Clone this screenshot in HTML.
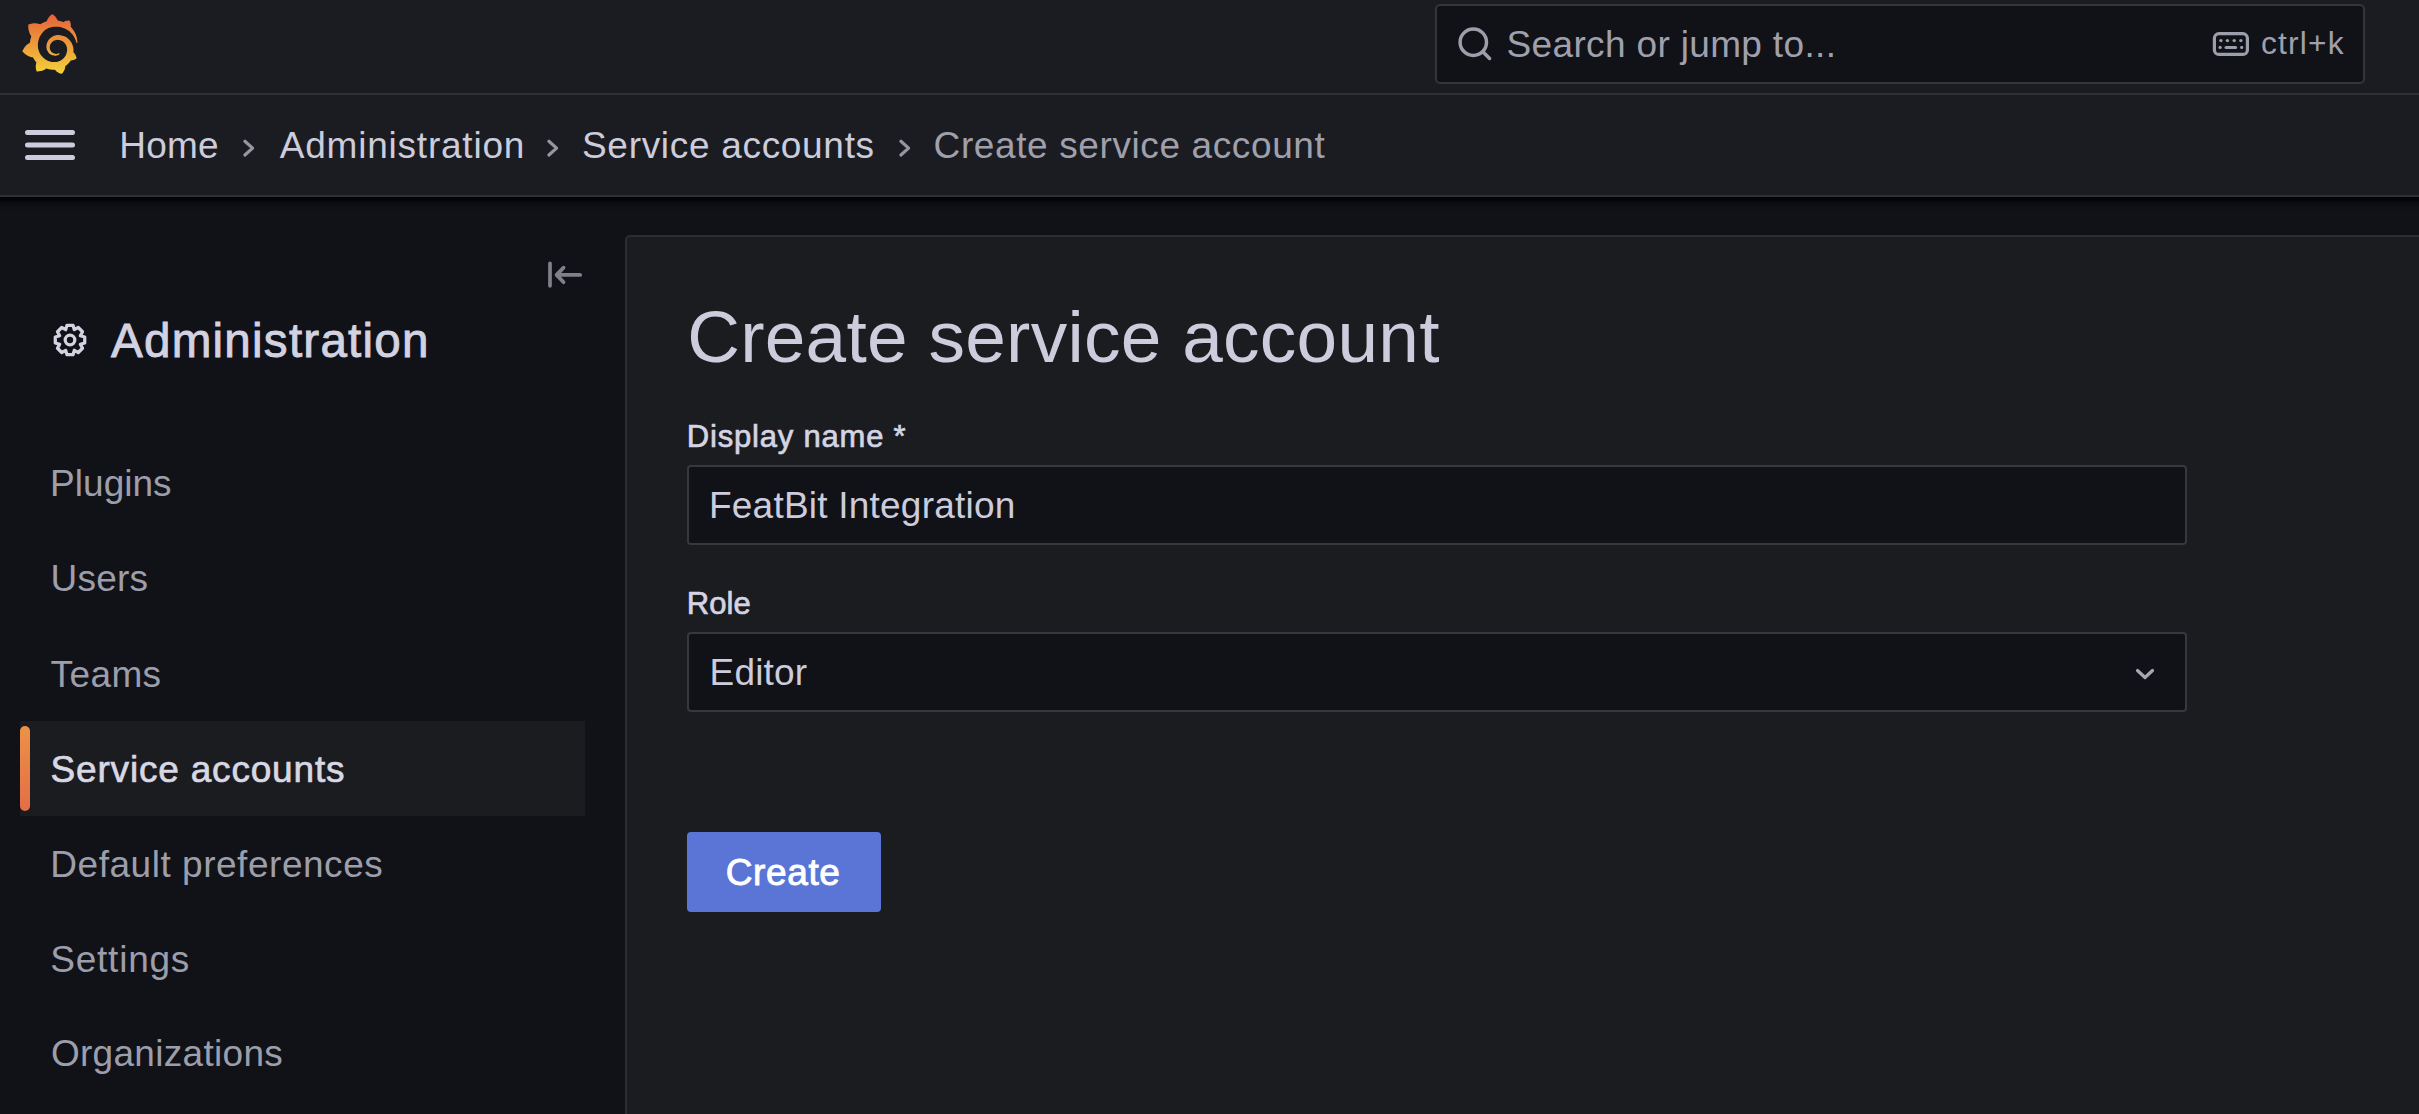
<!DOCTYPE html>
<html><head><meta charset="utf-8">
<style>
html,body{margin:0;padding:0;}
body{width:2419px;height:1114px;overflow:hidden;background:#111217;position:relative;font-family:"Liberation Sans",sans-serif;color:#ccccdc;}
.a{position:absolute;white-space:nowrap;line-height:1;}
#top{position:absolute;left:0;top:0;width:2419px;height:93px;background:#1b1c21;border-bottom:2px solid #2f3035;}
#bc{position:absolute;left:0;top:95px;width:2419px;height:100px;background:#1b1c21;border-bottom:2px solid #303136;}
#shadow{position:absolute;left:0;top:197px;width:2419px;height:14px;background:linear-gradient(#020308 0px,#04050a 3px,#0a0b0f 5px,#0e0f14 9px,#111217 14px);}
#search{position:absolute;left:1435px;top:4px;width:926px;height:76px;background:#111217;border:2px solid #34353b;border-radius:5px;}
#panel{position:absolute;left:625px;top:235px;width:1900px;height:1000px;background:#1b1c20;border:2px solid #2c2d33;border-radius:5px;}
.t37{font-size:37px;}
.sec{color:#a0a0ad;}
.inp{position:absolute;background:#111217;border:2px solid #37383e;border-radius:4px;}
.side{font-size:37px;color:#9d9eab;letter-spacing:0.7px;}
</style></head><body>
<div id="top"></div>
<div id="bc"></div>
<div id="shadow"></div>

<!-- logo -->
<svg class="a" style="left:21.1px;top:14.1px" width="57.7" height="60" viewBox="0 0 351 365">
<defs><linearGradient id="lg" x1="50%" x2="50%" y1="100%" y2="0%"><stop offset="0%" stop-color="#f3d23a"/><stop offset="100%" stop-color="#e6623a"/></linearGradient></defs>
<path fill="url(#lg)" d="M342,161.2c-0.6-6.1-1.6-13.1-3.6-20.9c-1.9-7.7-4.9-16.2-9.3-25c-4.4-8.8-10.1-17.9-17.5-26.8c-2.9-3.5-6.1-6.9-9.5-10.2c5.1-20.3-6.2-37.9-6.2-37.9c-19.5-1.2-31.9,6.1-36.5,9.4c-0.8-0.3-1.5-0.7-2.3-1c-3.3-1.3-6.7-2.6-10.3-3.7c-3.5-1.1-7.1-2.1-10.8-3c-3.7-0.9-7.4-1.6-11.2-2.2c-0.7-0.1-1.3-0.2-2-0.3c-8.5-27.2-32.9-38.6-32.9-38.6c-27.3,17.3-32.4,41.5-32.4,41.5s-0.1,0.5-0.3,1.4c-1.5,0.4-3,0.9-4.5,1.3c-2.1,0.6-4.2,1.4-6.2,2.2c-2.1,0.8-4.1,1.6-6.2,2.5c-4.1,1.8-8.2,3.8-12.2,6c-3.9,2.2-7.7,4.6-11.4,7.1c-0.5-0.2-1-0.4-1-0.4c-37.8-14.4-71.3,2.9-71.3,2.9c-3.1,40.2,15.1,65.5,18.7,70.1c-0.9,2.5-1.7,5-2.5,7.5c-2.8,9.1-4.9,18.4-6.2,28.1c-0.2,1.4-0.4,2.8-0.5,4.2C18.8,192.7,8.5,228,8.5,228c29.1,33.5,63.1,35.6,63.1,35.6c0,0,0.1-0.1,0.1-0.1c4.3,7.7,9.3,15,15,21.9c2.4,2.9,4.9,5.7,7.5,8.3c-10.6,30.4,1.5,55.6,1.5,55.6c32.4,1.2,53.7-14.2,58.2-17.7c3.2,1.1,6.5,2.1,9.8,2.9c10,2.6,20.2,4.1,30.4,4.5c2.5,0.1,5.1,0.2,7.6,0.1l1.2,0l0.8,0l1.6,0l1.6-0.1l0,0.1c15.3,21.8,42.1,24.9,42.1,24.9c19.1-20.1,20.2-40.1,20.2-44.4l0,0c0,0,0-0.1,0-0.3c0-0.4,0-0.6,0-0.6l0,0c0-0.3,0-0.6,0-0.9c4-2.8,7.8-5.8,11.4-9.1c7.6-6.9,14.3-14.8,19.9-23.3c0.5-0.8,1-1.6,1.5-2.4c21.6,1.2,36.9-13.4,36.9-13.4c-3.6-22.5-16.4-33.5-19.1-35.6l0,0c0,0-0.1-0.1-0.3-0.2c-0.2-0.1-0.2-0.2-0.2-0.2c0,0,0,0,0,0c-0.1-0.1-0.2-0.1-0.4-0.2c0.1-1.4,0.2-2.7,0.3-4.1c0.2-2.4,0.2-4.9,0.2-7.3l0-1.8l0-0.9l0-0.5c0-0.6,0-0.4,0-0.6l-0.1-1.5l-0.1-2c0-0.7-0.1-1.3-0.2-1.9c-0.1-0.6-0.1-1.3-0.2-1.9l-0.2-1.9l-0.3-1.9c-0.4-2.5-0.8-4.9-1.4-7.4c-2.3-9.7-6.1-18.9-11-27.2c-5-8.3-11.2-15.6-18.3-21.8c-7-6.2-14.9-11.2-23.1-14.9c-8.3-3.7-16.9-6.1-25.5-7.2c-4.3-0.6-8.6-0.8-12.9-0.7l-1.6,0l-0.4,0c-0.1,0-0.6,0-0.5,0l-0.7,0l-1.6,0.1c-0.6,0-1.2,0.1-1.7,0.1c-2.2,0.2-4.4,0.5-6.5,0.9c-8.6,1.6-16.7,4.7-23.8,9c-7.1,4.3-13.3,9.6-18.3,15.6c-5,6-8.9,12.7-11.6,19.6c-2.7,6.9-4.2,14.1-4.6,21c-0.1,1.7-0.1,3.5-0.1,5.2c0,0.4,0,0.9,0,1.3l0.1,1.4c0.1,0.8,0.1,1.7,0.2,2.5c0.3,3.5,1,6.9,1.9,10.1c1.9,6.5,4.9,12.4,8.6,17.4c3.7,5,8.2,9.1,12.9,12.4c4.7,3.2,9.8,5.5,14.8,7c5,1.5,10,2.1,14.7,2.1c0.6,0,1.2,0,1.7,0c0.3,0,0.6,0,0.9,0c0.3,0,0.6,0,0.9-0.1c0.5,0,1-0.1,1.5-0.1c0.1,0,0.3,0,0.4-0.1l0.5-0.1c0.3,0,0.6-0.1,0.9-0.1c0.6-0.1,1.1-0.2,1.7-0.3c0.6-0.1,1.1-0.2,1.6-0.4c1.1-0.2,2.1-0.6,3.1-0.9c2-0.7,4-1.5,5.7-2.4c1.8-0.9,3.4-2,5-3c0.4-0.3,0.9-0.6,1.3-1c1.6-1.3,1.9-3.7,0.6-5.3c-1.1-1.4-3.1-1.8-4.7-0.9c-0.4,0.2-0.8,0.4-1.2,0.6c-1.4,0.7-2.8,1.3-4.3,1.8c-1.5,0.5-3.1,0.9-4.7,1.2c-0.8,0.1-1.6,0.2-2.5,0.3c-0.4,0-0.8,0.1-1.300,0.1c-0.4,0-0.9,0-1.2,0c-0.4,0-0.8,0-1.2,0c-0.5,0-1,0-1.5-0.1c0,0-0.3,0-0.1,0l-0.2,0l-0.3,0c-0.2,0-0.5,0-0.7-0.1c-0.5-0.1-0.9-0.1-1.4-0.2c-3.7-0.5-7.4-1.6-10.9-3.2c-3.6-1.6-7-3.8-10.1-6.6c-3.1-2.8-5.8-6.1-7.9-9.9c-2.1-3.8-3.6-8-4.3-12.4c-0.3-2.2-0.5-4.5-0.4-6.700c0-0.6,0.1-1.2,0.1-1.8c0,0.2,0-0.1,0-0.1l0-0.2l0-0.5c0-0.3,0.1-0.6,0.1-0.9c0.1-1.2,0.3-2.4,0.5-3.6c1.7-9.6,6.5-19,13.9-26.1c1.9-1.8,3.9-3.4,6-4.9c2.1-1.5,4.4-2.8,6.8-3.9c2.4-1.1,4.8-2,7.4-2.7c2.5-0.7,5.1-1.1,7.8-1.4c1.3-0.1,2.6-0.2,4-0.2c0.4,0,0.6,0,0.9,0l1.1,0l0.7,0c0.3,0,0,0,0.1,0l0.3,0l1.1,0.1c2.9,0.2,5.7,0.6,8.5,1.3c5.6,1.2,11.1,3.3,16.2,6.1c10.2,5.7,18.9,14.5,24.2,25.1c2.7,5.3,4.6,11,5.5,16.9c0.2,1.5,0.4,3,0.5,4.5l0.1,1.1l0.1,1.1c0,0.4,0,0.8,0,1.1c0,0.4,0,0.8,0,1.1l0,1l0,1.1c0,0.7-0.1,1.9-0.1,2.6c-0.1,1.6-0.3,3.3-0.5,4.9c-0.2,1.6-0.5,3.2-0.8,4.8c-0.3,1.6-0.7,3.2-1.1,4.7c-0.8,3.1-1.8,6.2-3,9.3c-2.4,6-5.6,11.8-9.4,17.1c-7.7,10.6-18.2,19.2-30.2,24.7c-6,2.7-12.3,4.7-18.8,5.7c-3.2,0.6-6.5,0.9-9.8,1l-0.6,0l-0.5,0l-1.1,0l-1.6,0l-0.8,0c0.4,0-0.1,0-0.1,0l-0.3,0c-1.8,0-3.5-0.1-5.3-0.3c-7-0.5-13.9-1.8-20.6-3.7c-6.7-1.9-13.2-4.6-19.4-7.8c-12.3-6.6-23.4-15.6-32-26.5c-4.3-5.4-8.1-11.3-11.2-17.4c-3.1-6.1-5.6-12.6-7.4-19.1c-1.8-6.6-2.9-13.3-3.4-20.1l-0.1-1.3l0-0.3l0-0.3l0-0.6l0-1.1l0-0.3l0-0.4l0-0.8l0-1.6l0-0.3c0,0,0,0.1,0-0.1l0-0.6c0-0.8,0-1.7,0-2.5c0.1-3.3,0.4-6.8,0.8-10.2c0.4-3.4,1-6.9,1.7-10.3c0.7-3.4,1.5-6.8,2.5-10.2c1.9-6.7,4.3-13.2,7.1-19.3c5.7-12.2,13.1-23.1,22-31.8c2.2-2.2,4.5-4.2,6.9-6.2c2.4-1.9,4.9-3.7,7.5-5.4c2.5-1.7,5.2-3.2,7.9-4.6c1.3-0.7,2.7-1.4,4.1-2c0.7-0.3,1.4-0.6,2.1-0.9c0.7-0.3,1.4-0.6,2.1-0.9c2.8-1.2,5.7-2.2,8.7-3.1c0.7-0.2,1.5-0.4,2.2-0.7c0.7-0.2,1.5-0.4,2.2-0.6c1.5-0.4,3-0.8,4.5-1.1c0.7-0.2,1.5-0.3,2.3-0.5c0.8-0.2,1.5-0.3,2.3-0.5c0.8-0.1,1.5-0.3,2.3-0.4l1.1-0.2l1.2-0.2c0.8-0.1,1.5-0.2,2.3-0.3c0.9-0.1,1.7-0.2,2.6-0.3c0.7-0.1,1.9-0.2,2.6-0.3c0.5-0.1,1.1-0.1,1.6-0.2l1.1-0.1l0.5,0l0.6,0c0.9-0.1,1.7-0.1,2.6-0.2l1.3-0.1c0,0,0.5,0,0.1,0l0.3,0l0.6,0c0.7,0,1.5-0.1,2.2-0.1c2.9-0.1,5.9-0.1,8.8,0c5.8,0.2,11.5,0.9,17,1.9c11.1,2.1,21.5,5.6,31,10.3c9.5,4.6,17.9,10.3,25.3,16.5c0.5,0.4,0.9,0.8,1.4,1.2c0.4,0.4,0.9,0.8,1.3,1.2c0.9,0.8,1.7,1.6,2.6,2.4c0.9,0.8,1.7,1.6,2.5,2.4c0.8,0.8,1.6,1.6,2.4,2.5c3.1,3.3,6,6.6,8.6,10c5.2,6.7,9.4,13.5,12.7,19.9c0.2,0.4,0.4,0.8,0.6,1.2c0.2,0.4,0.4,0.8,0.6,1.2c0.4,0.8,0.8,1.6,1.1,2.4c0.4,0.8,0.7,1.5,1.1,2.3c0.3,0.8,0.7,1.5,1,2.3c1.2,3,2.4,5.9,3.3,8.6c1.5,4.4,2.6,8.3,3.5,11.7c0.3,1.4,1.6,2.3,3,2.1c1.5-0.1,2.6-1.3,2.6-2.8C342.6,170.4,342.5,166.1,342,161.2z"/>
</svg>

<!-- search -->
<div id="search"></div>
<svg class="a" style="left:1456px;top:26px" width="38" height="38" viewBox="0 0 38 38"><circle cx="17.3" cy="16.2" r="13.2" fill="none" stroke="#9d9eab" stroke-width="3.5"/><path d="M26.9 25.8 L33.6 32.5" stroke="#9d9eab" stroke-width="3.5" stroke-linecap="round"/></svg>
<div class="a t37 sec" style="left:1506.6px;top:25.7px;letter-spacing:0.34px;">Search or jump to...</div>
<svg class="a" style="left:2211px;top:31px" width="40" height="27" viewBox="0 0 40 27"><rect x="3.4" y="2.7" width="33" height="20.7" rx="4.5" fill="none" stroke="#9d9eab" stroke-width="3.2"/><g fill="#9d9eab"><circle cx="9.9" cy="9.6" r="1.7"/><circle cx="16.4" cy="9.6" r="1.7"/><circle cx="23.2" cy="9.6" r="1.7"/><circle cx="29.9" cy="9.6" r="1.7"/><circle cx="9.1" cy="16.4" r="1.6"/><rect x="13.5" y="14.9" width="12.6" height="3" rx="1.5"/><circle cx="30.7" cy="16.4" r="1.6"/></g></svg>
<div class="a sec" style="left:2261px;top:28.2px;font-size:31.7px;letter-spacing:1.2px;">ctrl+k</div>

<!-- hamburger -->
<svg class="a" style="left:22px;top:127px" width="56" height="36" viewBox="0 0 56 36"><g stroke="#ccccdc" stroke-width="5" stroke-linecap="round"><path d="M5.5 5.5H50.5M5.5 18H50.5M5.5 30.5H50.5"/></g></svg>

<!-- breadcrumbs -->
<div class="a t37" style="left:119.3px;top:126.7px;letter-spacing:0.23px;">Home</div>
<div class="a t37" style="left:279.8px;top:126.7px;letter-spacing:0.78px;">Administration</div>
<div class="a t37" style="left:582px;top:126.7px;letter-spacing:0.69px;">Service accounts</div>
<div class="a t37 sec" style="left:933.6px;top:126.7px;letter-spacing:0.61px;">Create service account</div>
<svg class="a" style="left:240px;top:137px" width="18" height="22" viewBox="0 0 18 22"><path d="M4.9 4.2 L12.6 11.1 L4.9 18" fill="none" stroke="#95969f" stroke-width="3.2" stroke-linecap="round" stroke-linejoin="round"/></svg>
<svg class="a" style="left:544px;top:137px" width="18" height="22" viewBox="0 0 18 22"><path d="M4.9 4.2 L12.6 11.1 L4.9 18" fill="none" stroke="#95969f" stroke-width="3.2" stroke-linecap="round" stroke-linejoin="round"/></svg>
<svg class="a" style="left:896px;top:137px" width="18" height="22" viewBox="0 0 18 22"><path d="M4.9 4.2 L12.6 11.1 L4.9 18" fill="none" stroke="#95969f" stroke-width="3.2" stroke-linecap="round" stroke-linejoin="round"/></svg>

<!-- sidebar -->
<svg class="a" style="left:543px;top:258px" width="42" height="34" viewBox="0 0 42 34"><g fill="none" stroke="#7f808a" stroke-width="3.7" stroke-linecap="round" stroke-linejoin="round"><path d="M7 5.3V27.8M37.2 16.9H13.6M20.6 9.6L13.6 16.9L20.6 24.2"/></g></svg>
<svg class="a" style="left:45.1px;top:315px" width="50" height="50" viewBox="0 0 50 50"><path d="M20.71 14.65 L22.01 10.30 L27.99 10.30 L29.29 14.65 L29.29 14.65 L33.28 12.49 L37.51 16.72 L35.35 20.71 L35.35 20.71 L39.70 22.01 L39.70 27.99 L35.35 29.29 L35.35 29.29 L37.51 33.28 L33.28 37.51 L29.29 35.35 L29.29 35.35 L27.99 39.70 L22.01 39.70 L20.71 35.35 L20.71 35.35 L16.72 37.51 L12.49 33.28 L14.65 29.29 L14.65 29.29 L10.30 27.99 L10.30 22.01 L14.65 20.71 L14.65 20.71 L12.49 16.72 L16.72 12.49 L20.71 14.65Z" fill="none" stroke="#d2d2e0" stroke-width="3.3" stroke-linejoin="round"/><circle cx="25" cy="25" r="4.8" fill="none" stroke="#d2d2e0" stroke-width="3.3"/></svg>
<div class="a" style="left:111px;top:317.2px;font-size:47.6px;letter-spacing:1.23px;color:#d2d2e0;-webkit-text-stroke:0.9px #d2d2e0;">Administration</div>

<div class="a side" style="left:50.1px;top:464.7px;letter-spacing:0.02px;">Plugins</div>
<div class="a side" style="left:50.5px;top:559.7px;letter-spacing:0.22px;">Users</div>
<div class="a side" style="left:50.6px;top:655.8px;letter-spacing:0.38px;">Teams</div>
<div class="a" style="left:20px;top:721px;width:565px;height:95px;background:#1b1c20;"></div>
<div class="a" style="left:20px;top:726px;width:10px;height:85px;border-radius:5px;background:linear-gradient(#ec9248,#e46d47);"></div>
<div class="a side" style="left:50.6px;top:750.7px;letter-spacing:0.81px;color:#d8d8e4;-webkit-text-stroke:0.7px #d8d8e4;">Service accounts</div>
<div class="a side" style="left:50.3px;top:846.4px;letter-spacing:0.53px;">Default preferences</div>
<div class="a side" style="left:50.3px;top:940.6px;letter-spacing:0.76px;">Settings</div>
<div class="a side" style="left:50.9px;top:1035.2px;letter-spacing:0.30px;">Organizations</div>

<!-- panel -->
<div id="panel"></div>
<div class="a" style="left:687.2px;top:300.4px;font-size:73px;letter-spacing:0.27px;">Create service account</div>
<div class="a" style="left:686.8px;top:421.1px;font-size:31px;letter-spacing:0.8px;color:#d4d4e2;-webkit-text-stroke:0.7px #d4d4e2;">Display name *</div>
<div class="inp" style="left:687px;top:465px;width:1496px;height:76px;"></div>
<div class="a t37" style="left:709px;top:487.2px;letter-spacing:0.22px;">FeatBit Integration</div>
<div class="a" style="left:686.8px;top:588.2px;font-size:31px;letter-spacing:0.1px;color:#d4d4e2;-webkit-text-stroke:0.7px #d4d4e2;">Role</div>
<div class="inp" style="left:687px;top:632px;width:1496px;height:76px;"></div>
<div class="a t37" style="left:709.5px;top:653.7px;letter-spacing:0.2px;">Editor</div>
<svg class="a" style="left:2130px;top:662px" width="30" height="24" viewBox="0 0 30 24"><path d="M7.5 8.5 L15 15.5 L22.5 8.5" fill="none" stroke="#a6a7b2" stroke-width="3.2" stroke-linecap="round" stroke-linejoin="round"/></svg>
<div class="a" style="left:687px;top:832px;width:194px;height:80px;background:#5a75d5;border-radius:4px;"></div>
<div class="a" style="left:725.8px;top:854.3px;font-size:37px;letter-spacing:0.6px;color:#ffffff;-webkit-text-stroke:0.9px #fff;">Create</div>
</body></html>
